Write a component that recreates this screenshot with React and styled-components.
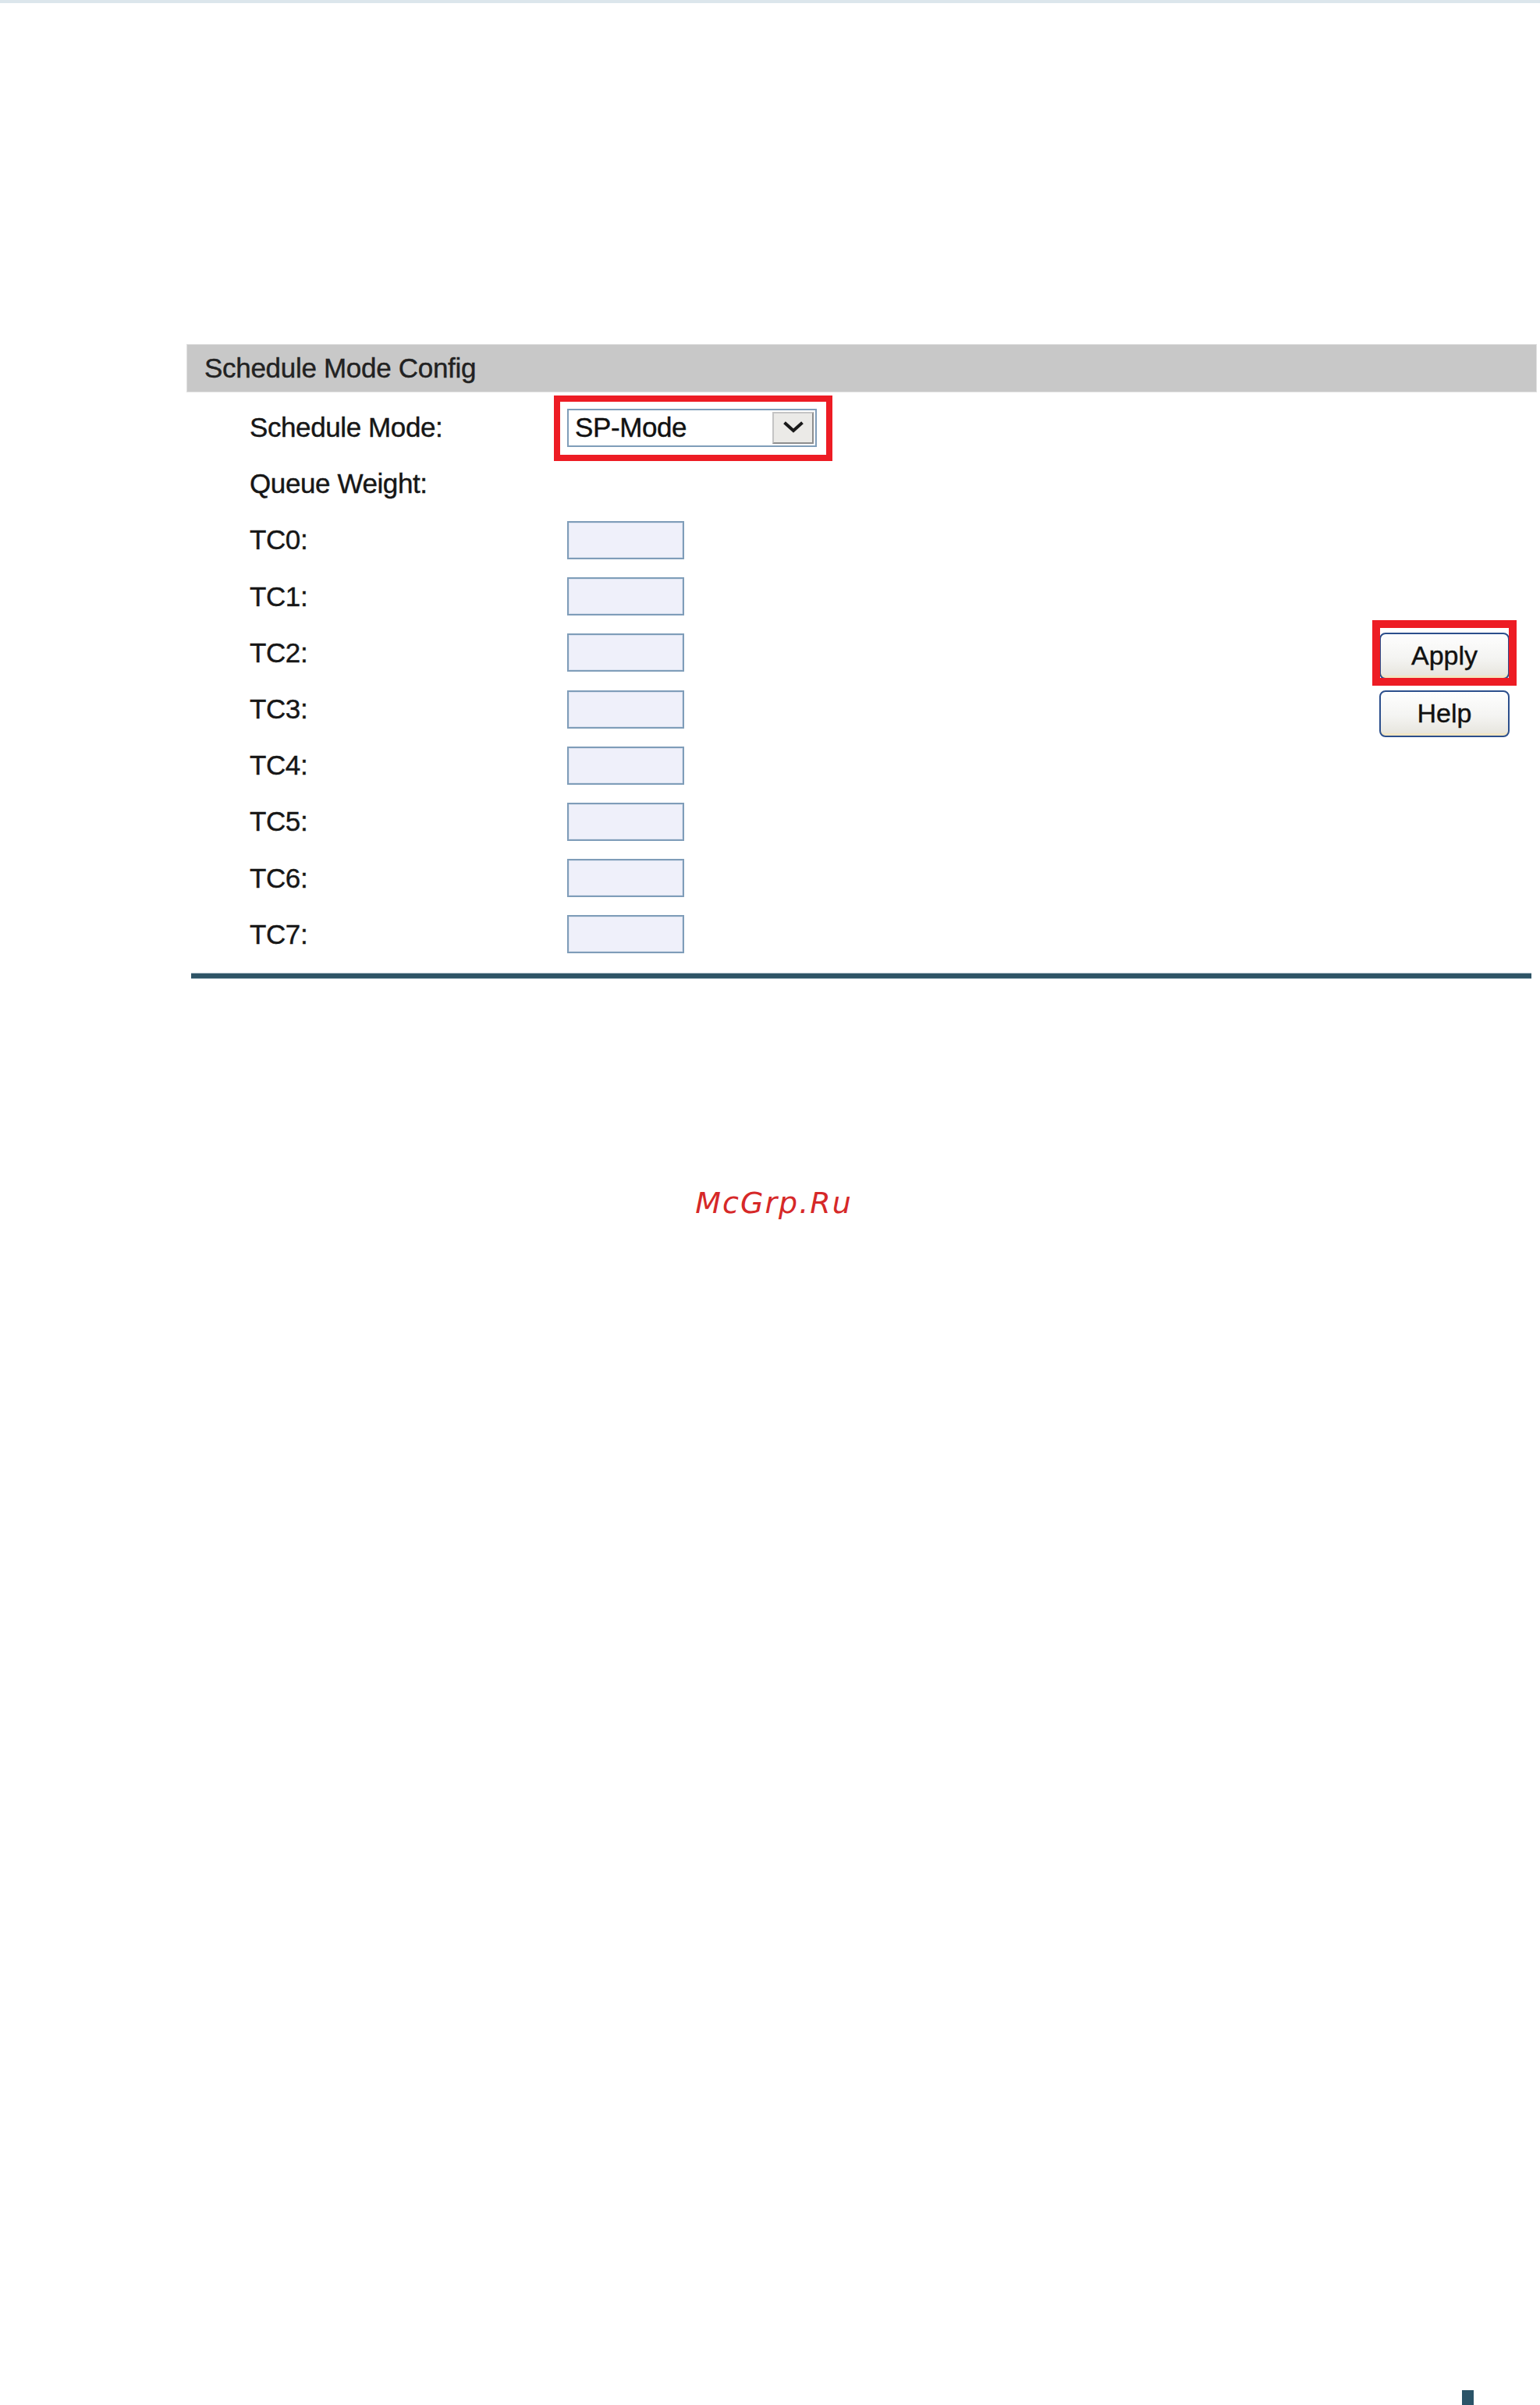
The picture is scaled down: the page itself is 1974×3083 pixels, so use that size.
import React from "react";
import styled, { createGlobalStyle } from "styled-components";

const GlobalStyle = createGlobalStyle`
  html, body { margin: 0; padding: 0; background: #ffffff; }
  body { font-family: "Liberation Sans", Arial, sans-serif; color: #1a1a1a; }
  * { box-sizing: border-box; }
`;

const Page = styled.div`
  width: 1974px;
  min-height: 3083px;
  display: flex;
  flex-direction: column;
  background: #fff;
`;

const TopRule = styled.div`
  height: 4px;
  background: #dce6ec;
`;

const Panel = styled.section`
  margin: 437px 4px 0 239px;
  display: flex;
  flex-direction: column;
`;

const Header = styled.div`
  height: 62px;
  background: #c8c8c8;
  border: 1px solid #e0e0e0;
  display: flex;
  align-items: center;
  padding-left: 22px;
  font-size: 35px;
  color: #222;
  letter-spacing: -0.3px;
  -webkit-text-stroke: 0.4px #222;
`;

const Body = styled.div`
  display: flex;
  padding-top: 9px;
`;

const Rows = styled.div`
  flex: 1;
  display: grid;
  grid-auto-rows: 72.2px;
  padding-left: 81px;
`;

const Row = styled.div`
  display: grid;
  grid-template-columns: 407px 1fr;
  align-items: center;
`;

const Label = styled.span`
  font-size: 35px;
  color: #161616;
  letter-spacing: -0.4px;
  -webkit-text-stroke: 0.4px #161616;
`;

const Highlight = styled.span`
  position: relative;
  display: inline-flex;
  justify-self: start;
`;

const Mark = styled.span`
  position: absolute;
  top: ${(p) => p.$top}px;
  left: ${(p) => p.$left}px;
  right: ${(p) => p.$right}px;
  bottom: ${(p) => p.$bottom}px;
  border: ${(p) => p.$thick}px solid #ed1c24;
  pointer-events: none;
`;

const Select = styled.div`
  width: 320px;
  height: 49px;
  border: 2px solid #7f9db9;
  background: #fff;
  display: flex;
  align-items: center;
  padding: 2px;
`;

const SelectValue = styled.span`
  flex: 1;
  padding-left: 6px;
  font-size: 35px;
  color: #111;
  letter-spacing: -0.4px;
  -webkit-text-stroke: 0.4px #111;
`;

const DropButton = styled.span`
  width: 53px;
  height: 41px;
  background: #ebeae7;
  border: 2px solid #8e8e8e;
  border-left-color: #c4c4c4;
  border-top-color: #c4c4c4;
  display: flex;
  align-items: center;
  justify-content: center;
`;

const WeightInput = styled.div`
  width: 150px;
  height: 49px;
  border: 2px solid #7f9db9;
  background: #eff0fa;
  box-shadow: inset 0 0 0 1px #dde3f0;
`;

const ButtonColumn = styled.div`
  width: 167px;
  margin-right: 35px;
  padding-top: 10px;
  display: flex;
  flex-direction: column;
  justify-content: center;
  gap: 14px;
`;

const Button = styled.button`
  width: 167px;
  height: 60px;
  border: 2px solid #2c4f8c;
  border-radius: 8px;
  background: linear-gradient(#fefefe 0%, #f4f4f2 55%, #e6e4dc 100%);
  box-shadow: inset 0 -5px 0 -2px #f1e6c4;
  font-family: "Liberation Sans", Arial, sans-serif;
  font-size: 34px;
  color: #111;
  -webkit-text-stroke: 0.4px #111;
  padding: 0;
  display: flex;
  align-items: center;
  justify-content: center;
`;

const BottomRule = styled.div`
  margin: 13px 7px 0 6px;
  height: 8px;
  background: #2e5466;
  border-top: 1px solid #a8bcc6;
  border-bottom: 1px solid #a8bcc6;
`;

const Watermark = styled.div`
  margin-top: 265px;
  padding-left: 10px;
  text-align: center;
  font-family: "DejaVu Sans", sans-serif;
  font-style: oblique;
  font-size: 38px;
  line-height: 44px;
  letter-spacing: 2px;
  color: #d62828;
`;

const CornerMark = styled.div`
  margin-top: auto;
  align-self: flex-end;
  margin-right: 85px;
  width: 15px;
  height: 19px;
  background: #2b5468;
`;

const Chevron = () => (
  <svg width="28" height="18" viewBox="0 0 28 18" aria-hidden="true">
    <polyline
      points="4,4 14,13 24,4"
      fill="none"
      stroke="#1a1a1a"
      strokeWidth="4"
      strokeLinecap="square"
    />
  </svg>
);

const queues = ["TC0", "TC1", "TC2", "TC3", "TC4", "TC5", "TC6", "TC7"];

export default function App() {
  return (
    <>
      <GlobalStyle />
      <Page>
        <TopRule />
        <Panel>
          <Header>Schedule Mode Config</Header>
          <Body>
            <Rows>
              <Row>
                <Label>Schedule Mode:</Label>
                <Highlight>
                  <Select>
                    <SelectValue>SP-Mode</SelectValue>
                    <DropButton>
                      <Chevron />
                    </DropButton>
                  </Select>
                  <Mark $top={-17} $left={-17} $right={-20} $bottom={-18} $thick={8} />
                </Highlight>
              </Row>
              <Row>
                <Label>Queue Weight:</Label>
              </Row>
              {queues.map((q) => (
                <Row key={q}>
                  <Label>{q}:</Label>
                  <WeightInput />
                </Row>
              ))}
            </Rows>
            <ButtonColumn>
              <Highlight>
                <Button>Apply</Button>
                <Mark $top={-16} $left={-9} $right={-9} $bottom={-8} $thick={10} />
              </Highlight>
              <Button>Help</Button>
            </ButtonColumn>
          </Body>
          <BottomRule />
        </Panel>
        <Watermark>McGrp.Ru</Watermark>
        <CornerMark />
      </Page>
    </>
  );
}
